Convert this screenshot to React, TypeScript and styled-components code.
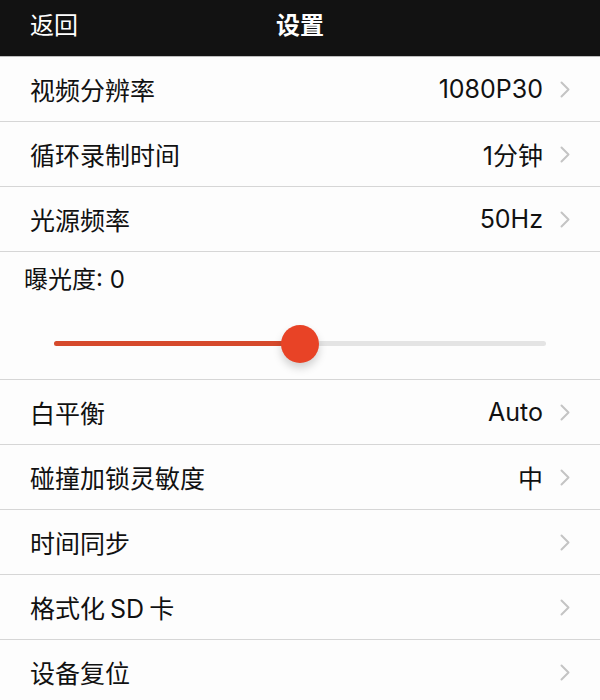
import styled, { createGlobalStyle } from "styled-components";

const GlobalStyle = createGlobalStyle`
    html, body {
        margin: 0;
        padding: 0;
        background: #fdfdfd;
    }
    body {
        font-family: Inter, "Noto Sans CJK SC", sans-serif;
        color: #111;
    }
`;

const Page = styled.div`
    width: 600px;
    height: 700px;
    overflow: hidden;
    background: #fdfdfd;
`;

const NavBar = styled.div`
    height: 57px;
    background: #121212;
    color: #fff;
    display: grid;
    grid-template-columns: 1fr auto 1fr;
    align-items: center;
    padding: 0 30px 9px;
    box-sizing: border-box;
    border-bottom: 1px solid #bdbdbd;
`;

const NavBack = styled.span`
    font-size: 24px;
    justify-self: start;
`;

const NavTitle = styled.span`
    font-size: 24px;
    font-weight: 600;
`;

const Row = styled.div`
    height: 65px;
    display: flex;
    align-items: center;
    padding: 0 30px;
    box-sizing: border-box;
    border-bottom: 1px solid #d6d6d6;
    font-size: 25px;
`;

const Label = styled.span`
    flex: 1;
    word-spacing: -2px;
`;

const Value = styled.span`
    margin-right: 17px;
`;

const Chevron = styled.svg`
    width: 10px;
    height: 17px;
`;

const SliderBlock = styled.div`
    height: 128px;
    box-sizing: border-box;
    padding: 12px 54px 0 24px;
    border-bottom: 1px solid #d6d6d6;
`;

const SliderLabel = styled.div`
    font-size: 24px;
    line-height: 32px;
`;

const Track = styled.div`
    margin: 45px 0 0 30px;
    height: 5px;
    border-radius: 3px;
    background: #e4e4e4;
    position: relative;
`;

const Fill = styled.div`
    height: 100%;
    border-radius: 3px;
    background: #d64a2c;
`;

const Thumb = styled.div`
    position: absolute;
    top: 50%;
    width: 38px;
    height: 38px;
    border-radius: 50%;
    background: #e84326;
    transform: translate(-50%, -50%);
    box-shadow: 0 5px 8px rgba(0, 0, 0, 0.18);
`;

type Item = { label: string; value?: string };

const topItems: Item[] = [
    { label: "视频分辨率", value: "1080P30" },
    { label: "循环录制时间", value: "1分钟" },
    { label: "光源频率", value: "50Hz" },
];

const bottomItems: Item[] = [
    { label: "白平衡", value: "Auto" },
    { label: "碰撞加锁灵敏度", value: "中" },
    { label: "时间同步" },
    { label: "格式化 SD 卡" },
    { label: "设备复位" },
];

function SettingRow({ label, value }: Item) {
    return (
        <Row>
            <Label>{label}</Label>
            {value && <Value>{value}</Value>}
            <Chevron viewBox="0 0 10 17" fill="none">
                <path d="M1.5 1.5 L8.5 8.5 L1.5 15.5" stroke="#c4c4c4" strokeWidth="2" strokeLinecap="round" strokeLinejoin="round" />
            </Chevron>
        </Row>
    );
}

export default function App() {
    const percent = 50;
    return (
        <Page>
            <GlobalStyle />
            <NavBar>
                <NavBack>返回</NavBack>
                <NavTitle>设置</NavTitle>
                <span />
            </NavBar>
            {topItems.map((item) => (
                <SettingRow key={item.label} {...item} />
            ))}
            <SliderBlock>
                <SliderLabel>曝光度: 0</SliderLabel>
                <Track>
                    <Fill style={{ width: `${percent}%` }} />
                    <Thumb style={{ left: `${percent}%` }} />
                </Track>
            </SliderBlock>
            {bottomItems.map((item) => (
                <SettingRow key={item.label} {...item} />
            ))}
        </Page>
    );
}
